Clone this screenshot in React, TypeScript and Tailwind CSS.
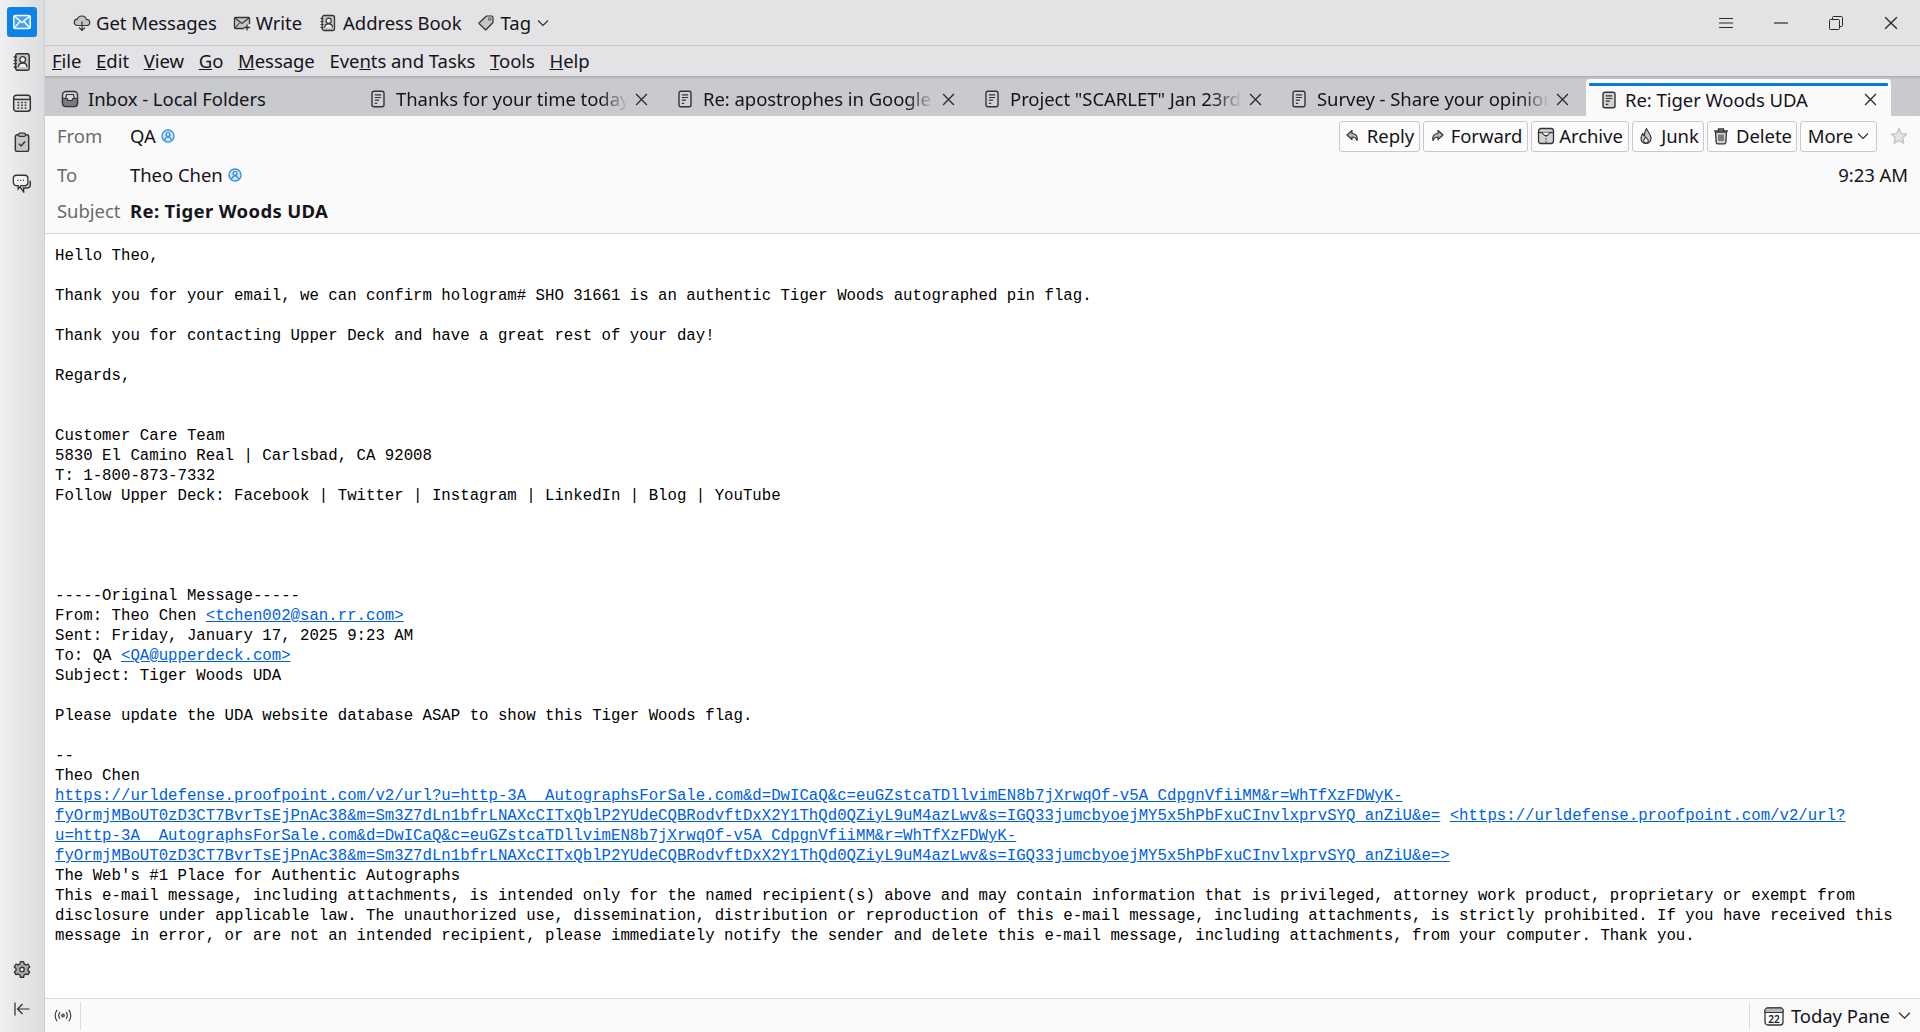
import React from 'react';

type IconProps = { className?: string };

const stroke = '#333335';

const MailIcon = ({ className = '' }: IconProps) => (
  <svg viewBox="0 0 20 20" className={className} fill="none">
    <rect x="2.5" y="4" width="15" height="12" rx="1.5" fill="#b9dcfb" fillOpacity="0.35" stroke="#fff" strokeWidth="1.4" />
    <path d="M3 4.5l7 6 7-6M3 15.5l5.2-6M17 15.5l-5.2-6" stroke="#fff" strokeWidth="1.2" />
  </svg>
);

const AddressBookIcon = ({ className = '' }: IconProps) => (
  <svg viewBox="0 0 18 18" className={className} fill="none">
    <rect x="3.2" y="1.5" width="12.3" height="15" rx="2" fill="#c6c6c8" stroke={stroke} strokeWidth="1.3" />
    <path d="M1.5 4.5h3M1.5 7.5h3M1.5 10.5h3M1.5 13.5h3" stroke={stroke} strokeWidth="1.2" />
    <circle cx="9.6" cy="6.8" r="2.6" fill="#f4f4f4" stroke={stroke} strokeWidth="1.2" />
    <path d="M5.8 13.5c0-2.4 1.4-3.6 3.8-3.6s3.8 1.2 3.8 3.6" fill="#f4f4f4" stroke={stroke} strokeWidth="1.2" />
  </svg>
);

const CalendarIcon = ({ className = '' }: IconProps) => (
  <svg viewBox="0 0 18 18" className={className} fill="none">
    <rect x="1.5" y="2" width="15" height="14.5" rx="2.5" fill="#dcdcde" stroke={stroke} strokeWidth="1.3" />
    <path d="M1.5 5.8h15" stroke={stroke} strokeWidth="1.3" />
    <path d="M5 8.5h1.5M8.2 8.5h1.5M11.4 8.5h1.5M5 11h1.5M8.2 11h1.5M11.4 11h1.5M5 13.5h1.5M8.2 13.5h1.5M11.4 13.5h1.5" stroke={stroke} strokeWidth="1.4" />
  </svg>
);

const TaskIcon = ({ className = '' }: IconProps) => (
  <svg viewBox="0 0 18 18" className={className} fill="none">
    <rect x="3" y="2.5" width="12" height="15" rx="1.8" fill="#c6c6c8" stroke={stroke} strokeWidth="1.3" />
    <rect x="6" y="1" width="6" height="3" rx="1" fill="#c6c6c8" stroke={stroke} strokeWidth="1.1" />
    <path d="M6.2 10.5l2 2 3.6-4" stroke={stroke} strokeWidth="1.3" />
  </svg>
);

const ChatIcon = ({ className = '' }: IconProps) => (
  <svg viewBox="0 0 18 18" className={className} fill="none">
    <path d="M7 12.5l3.5 4.5v-3.5h2.5c2 0 3.5-1 3.5-3V7" fill="#c6c6c8" stroke={stroke} strokeWidth="1.2" />
    <path d="M4 2h7.5c1.7 0 2.8 1 2.8 2.8v3.6c0 1.8-1.1 2.9-2.8 2.9H8l-2.5 3v-3H4c-1.7 0-2.8-1.1-2.8-2.9V4.8C1.2 3 2.3 2 4 2z" fill="#f2f2f2" stroke={stroke} strokeWidth="1.2" />
    <path d="M4.8 6.7h1M7.3 6.7h1M9.8 6.7h1" stroke={stroke} strokeWidth="1.2" />
  </svg>
);

const GearIcon = ({ className = '' }: IconProps) => (
  <svg viewBox="0 0 18 18" className={className} fill="none">
    <path d="M7.6 1.5h2.8l.5 2 1.6.9 2-.6 1.4 2.4-1.5 1.4v1.8l1.5 1.4-1.4 2.4-2-.6-1.6.9-.5 2H7.6l-.5-2-1.6-.9-2 .6-1.4-2.4 1.5-1.4V7.6L2.1 6.2l1.4-2.4 2 .6 1.6-.9z" fill="#a9a9ab" stroke={stroke} strokeWidth="1.2" strokeLinejoin="round" />
    <circle cx="9" cy="8.5" r="2" fill="#f2f2f2" stroke={stroke} strokeWidth="1.2" />
  </svg>
);

const CollapseIcon = ({ className = '' }: IconProps) => (
  <svg viewBox="0 0 18 18" className={className} fill="none">
    <path d="M2 2.5v13M16.5 9H4.5M9.5 4l-5 5 5 5" stroke="#2b2b2d" strokeWidth="1.2" />
  </svg>
);

const CloudIcon = ({ className = '' }: IconProps) => (
  <svg viewBox="0 0 18 18" className={className} fill="none">
    <path d="M5 11.5c-2.2 0-3.7-1.3-3.7-3.2 0-1.8 1.3-3 3-3.1C4.9 3.4 6.6 2 8.8 2c2.4 0 4.1 1.5 4.5 3.4 1.9 0 3.4 1.3 3.4 3 0 1.900-1.500 3.100-3.500 3.100z" fill="#c6c6c8" stroke={stroke} strokeWidth="1.2" />
    <path d="M9 7.500v9M6 13.500l3 3 3-3" stroke={stroke} strokeWidth="1.2" fill="none" />
  </svg>
);

const WriteIcon = ({ className = '' }: IconProps) => (
  <svg viewBox="0 0 18 18" className={className} fill="none">
    <path d="M11 14.500H2.500a1 1 0 01-1-1v-9a1 1 0 011-1h13a1 1 0 011 1V10" fill="#c6c6c8" stroke={stroke} strokeWidth="1.3" />
    <path d="M2 4l7 5.500L16 4M2 14l4.500-5" stroke={stroke} strokeWidth="1.1" />
    <path d="M14 10.500v6M11 13.500h6" stroke={stroke} strokeWidth="1.3" />
  </svg>
);

const TagIcon = ({ className = '' }: IconProps) => (
  <svg viewBox="0 0 18 18" className={className} fill="none">
    <path d="M9.500 2h5.200c.8 0 1.300.5 1.300 1.300v5.200L8.700 16 1.800 9.200z" fill="#c6c6c8" stroke={stroke} strokeWidth="1.2" strokeLinejoin="round" />
    <circle cx="12.700" cy="5.200" r="1.200" fill="#fff" stroke={stroke} />
  </svg>
);

const ChevronIcon = ({ className = '' }: IconProps) => (
  <svg viewBox="0 0 12 12" className={className} fill="none">
    <path d="M1 3.500l5 5 5-5" stroke="#2b2b2d" strokeWidth="1.1" />
  </svg>
);

const InboxIcon = ({ className = '' }: IconProps) => (
  <svg viewBox="0 0 18 18" className={className} fill="none">
    <rect x="1.500" y="1.500" width="15" height="15" rx="3.500" fill="#d9d9db" stroke={stroke} strokeWidth="1.4" />
    <path d="M4.500 8.500l1-4h7l1 4" stroke={stroke} strokeWidth="1.2" />
    <path d="M1.500 8.500h4.700l.8 2h4l.8-2h4.700v5a3 3 0 01-3 3h-9a3 3 0 01-3-3z" fill="#7b7b7d" stroke={stroke} strokeWidth="1.2" />
  </svg>
);

const MessageIcon = ({ className = '' }: IconProps) => (
  <svg viewBox="0 0 18 18" className={className} fill="none">
    <rect x="3" y="1.200" width="12" height="15.600" rx="2" fill="#d2d2d4" stroke={stroke} strokeWidth="1.4" />
    <path d="M5.800 4.800h6.400M5.800 7.500h6.400M5.800 10.200h4.200M5.800 13.400h2.400" stroke={stroke} strokeWidth="1.2" />
  </svg>
);

const CloseIcon = ({ className = '' }: IconProps) => (
  <svg viewBox="0 0 12 12" className={className} fill="none">
    <path d="M1 1l10 10M11 1L1 11" stroke="#2b2b2d" strokeWidth="1.2" />
  </svg>
);

const PersonBadge = ({ className = '' }: IconProps) => (
  <svg viewBox="0 0 14 14" className={className} fill="none">
    <circle cx="7" cy="7" r="6" fill="#cfe6fa" stroke="#3b93e0" strokeWidth="1.400" />
    <circle cx="7" cy="5.500" r="2" stroke="#2b86d8" strokeWidth="1.200" />
    <path d="M3.800 11c.2-2 1.300-3 3.200-3s3 1 3.200 3" stroke="#2b86d8" strokeWidth="1.200" />
  </svg>
);

const ReplyIcon = ({ className = '' }: IconProps) => (
  <svg viewBox="0 0 16 16" className={className} fill="none">
    <path d="M7 2.500L2 7l5 4.500V9c2.500 0 4 .8 5 3.500 1-4-1-7-5-7z" fill="#b9b9bb" stroke={stroke} strokeWidth="1.200" strokeLinejoin="round" />
  </svg>
);

const ForwardIcon = ({ className = '' }: IconProps) => (
  <svg viewBox="0 0 16 16" className={className} fill="none">
    <path d="M9 2.500L14 7l-5 4.500V9c-2.500 0-4 .8-5 3.500-1-4 1-7 5-7z" fill="#b9b9bb" stroke={stroke} strokeWidth="1.200" strokeLinejoin="round" />
  </svg>
);

const ArchiveIcon = ({ className = '' }: IconProps) => (
  <svg viewBox="0 0 18 18" className={className} fill="none">
    <rect x="1.500" y="1.500" width="15" height="15" rx="2.500" fill="#d2d2d4" stroke={stroke} strokeWidth="1.300" />
    <path d="M1.500 5.500h15" stroke={stroke} strokeWidth="1.300" />
    <path d="M5 5.500l2.500 3h3l2.500-3" fill="#f4f4f4" stroke={stroke} strokeWidth="1.100" />
    <path d="M9 8.500v8" stroke={stroke} strokeWidth="1.100" strokeDasharray="1.500 1.200" />
  </svg>
);

const JunkIcon = ({ className = '' }: IconProps) => (
  <svg viewBox="0 0 18 18" className={className} fill="none">
    <path d="M9.500 1.500c.5 3 4.500 5 4.500 9.500 0 3.500-2.300 5.500-5 5.500s-5-2-5-5.300c0-2 1-3.700 2-4.700.2 1.300.7 2 1.500 2.500C7.500 6 8 3.500 9.500 1.500z" fill="#c6c6c8" stroke={stroke} strokeWidth="1.200" strokeLinejoin="round" />
    <path d="M9 16c-1.500 0-2.300-1-2.300-2.300 0-1.500 1.300-2.200 2.100-3.700 1 1.300 2.500 2.200 2.500 3.800 0 1.200-.9 2.200-2.300 2.200z" fill="#fafafa" stroke={stroke} strokeWidth="1.100" />
  </svg>
);

const TrashIcon = ({ className = '' }: IconProps) => (
  <svg viewBox="0 0 18 18" className={className} fill="none">
    <path d="M3.500 5h11l-.7 10.500c-.1.800-.6 1.300-1.400 1.300H5.600c-.8 0-1.300-.5-1.400-1.300z" fill="#d2d2d4" stroke={stroke} strokeWidth="1.300" />
    <path d="M2 3.800h14M6.500 3.500V2h5v1.500" stroke={stroke} strokeWidth="1.300" />
    <path d="M7 7.500v6.500M9 7.500v6.500M11 7.500v6.500" stroke={stroke} strokeWidth="1.100" />
  </svg>
);

const StarIcon = ({ className = '' }: IconProps) => (
  <svg viewBox="0 0 18 18" className={className} fill="none">
    <path d="M9 1.500l2.300 5 5.400.6-4 3.700 1.100 5.400L9 13.500l-4.800 2.700 1.100-5.400-4-3.700 5.400-.6z" fill="#e4e4e6" stroke="#c0c0c2" strokeWidth="1.200" strokeLinejoin="round" />
  </svg>
);

const WirelessIcon = ({ className = '' }: IconProps) => (
  <svg viewBox="0 0 20 16" className={className} fill="none">
    <circle cx="10" cy="8" r="1.800" fill="#6e6e70" stroke={stroke} strokeWidth="0.600" />
    <path d="M6.800 4.500c-1.600 2-1.600 5 0 7M13.200 4.500c1.600 2 1.600 5 0 7M3.800 2c-2.800 3.500-2.800 8.500 0 12M16.200 2c2.800 3.500 2.800 8.500 0 12" stroke={stroke} strokeWidth="1.200" />
  </svg>
);

const TodayIcon = ({ className = '' }: IconProps) => (
  <svg viewBox="0 0 20 20" className={className} fill="none">
    <rect x="1" y="2" width="18" height="17" rx="3" fill="#fafafa" stroke={stroke} strokeWidth="1.300" />
    <path d="M1 3.500a2 2 0 012-1.500h14a2 2 0 012 1.500V6.500H1z" fill="#b9b9bb" stroke={stroke} strokeWidth="1" />
    <text x="10" y="16.500" textAnchor="middle" fontSize="10" fontWeight="600" fill="#222" fontFamily="Noto Sans, sans-serif">22</text>
  </svg>
);

const tabs = [
  'Thanks for your time today',
  'Re: apostrophes in Google Docs',
  'Project "SCARLET" Jan 23rd',
  'Survey - Share your opinion',
];

const menus: [string, string, string][] = [
  ['', 'F', 'ile'],
  ['', 'E', 'dit'],
  ['', 'V', 'iew'],
  ['', 'G', 'o'],
  ['', 'M', 'essage'],
  ['Eve', 'n', 'ts and Tasks'],
  ['', 'T', 'ools'],
  ['', 'H', 'elp'],
];

const bodyTop = `Hello Theo,

Thank you for your email, we can confirm hologram# SHO 31661 is an authentic Tiger Woods autographed pin flag.

Thank you for contacting Upper Deck and have a great rest of your day!

Regards,


Customer Care Team
5830 El Camino Real | Carlsbad, CA 92008
T: 1-800-873-7332
Follow Upper Deck: Facebook | Twitter | Instagram | LinkedIn | Blog | YouTube




-----Original Message-----
From: Theo Chen `;

const linkA = `https://urldefense.proofpoint.com/v2/url?u=http-3A__AutographsForSale.com&d=DwICaQ&c=euGZstcaTDllvimEN8b7jXrwqOf-v5A_CdpgnVfiiMM&r=WhTfXzFDWyK-
fyOrmjMBoUT0zD3CT7BvrTsEjPnAc38&m=Sm3Z7dLn1bfrLNAXcCITxQblP2YUdeCQBRodvftDxX2Y1ThQd0QZiyL9uM4azLwv&s=IGQ33jumcbyoejMY5x5hPbFxuCInvlxprvSYQ_anZiU&e=`;

const linkB = `<https://urldefense.proofpoint.com/v2/url?
u=http-3A__AutographsForSale.com&d=DwICaQ&c=euGZstcaTDllvimEN8b7jXrwqOf-v5A_CdpgnVfiiMM&r=WhTfXzFDWyK-
fyOrmjMBoUT0zD3CT7BvrTsEjPnAc38&m=Sm3Z7dLn1bfrLNAXcCITxQblP2YUdeCQBRodvftDxX2Y1ThQd0QZiyL9uM4azLwv&s=IGQ33jumcbyoejMY5x5hPbFxuCInvlxprvSYQ_anZiU&e=>`;

const bodyEnd = `
The Web's #1 Place for Authentic Autographs
This e-mail message, including attachments, is intended only for the named recipient(s) above and may contain information that is privileged, attorney work product, proprietary or exempt from
disclosure under applicable law. The unauthorized use, dissemination, distribution or reproduction of this e-mail message, including attachments, is strictly prohibited. If you have received this
message in error, or are not an intended recipient, please immediately notify the sender and delete this e-mail message, including attachments, from your computer. Thank you.`;

const linkClass = 'text-[#0060df] underline';

const ActionButton = ({ icon, label, width, gap = 'gap-1.5' }: { icon: React.ReactNode; label: React.ReactNode; width: string; gap?: string }) => (
  <div className={`flex h-[31px] items-center justify-center rounded-[3px] border border-[#c9c9cb] bg-[#fcfcfc] ${gap} ${width}`}>
    {icon}
    <span>{label}</span>
  </div>
);

export default function App() {
  return (
    <div className="flex h-screen w-full overflow-hidden bg-white font-['Noto_Sans',sans-serif] text-[18.5px] tracking-[-0.05px] text-[#15141a]">
      {/* Left rail */}
      <aside className="flex w-[45px] shrink-0 flex-col items-center border-r border-[#d0d0d2] bg-gradient-to-r from-[#f0f0f1] to-[#dcdcde] pt-[7px] pb-[14px]">
        <div className="flex h-[30px] w-[30px] items-center justify-center rounded-[3px] bg-[#0a84e8]">
          <MailIcon className="h-[22px] w-[22px]" />
        </div>
        <AddressBookIcon className="mt-[15px] h-[20px] w-[20px]" />
        <CalendarIcon className="mt-[21px] h-[20px] w-[20px]" />
        <TaskIcon className="mt-[19px] h-[20px] w-[20px]" />
        <ChatIcon className="mt-[21px] h-[20px] w-[20px]" />
        <GearIcon className="mt-auto h-[20px] w-[20px]" />
        <CollapseIcon className="mt-[20px] h-[18px] w-[18px]" />
      </aside>

      <div className="flex min-w-0 flex-1 flex-col">
        {/* Toolbar */}
        <div className="flex h-[46px] shrink-0 items-center border-b border-[#c8c8ca] bg-[#e3e3e6] pl-[28px]">
          <div className="flex items-center gap-[5px]">
            <CloudIcon className="h-[18px] w-[18px]" />
            <span>Get Messages</span>
          </div>
          <div className="ml-[16px] flex items-center gap-[5px]">
            <WriteIcon className="h-[18px] w-[18px]" />
            <span>Write</span>
          </div>
          <div className="ml-[17px] flex items-center gap-[6px]">
            <AddressBookIcon className="h-[18px] w-[18px]" />
            <span>Address Book</span>
          </div>
          <div className="ml-[15px] flex items-center gap-[6px]">
            <TagIcon className="h-[18px] w-[18px]" />
            <span>Tag</span>
            <ChevronIcon className="h-[12px] w-[12px]" />
          </div>
          <div className="ml-auto flex items-center pr-[22px]">
            <svg viewBox="0 0 14 12" className="h-[12px] w-[14px]" fill="none">
              <path d="M0 1.500h14M0 6h14M0 10.500h14" stroke="#2b2b2d" strokeWidth="1.200" />
            </svg>
            <svg viewBox="0 0 14 12" className="ml-[41px] h-[12px] w-[14px]" fill="none">
              <path d="M0 6h14" stroke="#2b2b2d" strokeWidth="1.200" />
            </svg>
            <svg viewBox="0 0 14 14" className="ml-[41px] h-[14px] w-[14px]" fill="none">
              <rect x="0.500" y="3.500" width="10" height="10" rx="1" stroke="#2b2b2d" />
              <path d="M3.500 3.500V1.500a1 1 0 011-1h8a1 1 0 011 1v8a1 1 0 01-1 1h-2" stroke="#2b2b2d" />
            </svg>
            <CloseIcon className="ml-[41px] h-[14px] w-[14px]" />
          </div>
        </div>

        {/* Menu bar */}
        <nav className="flex h-[30px] shrink-0 items-center gap-[14.7px] bg-[#e3e3e6] pl-[7px]">
          {menus.map(([before, key, after]) => (
            <span key={before + key + after}>
              {before}
              <u>{key}</u>
              {after}
            </span>
          ))}
        </nav>

        {/* Tabs */}
        <div className="flex h-[40px] shrink-0 items-end bg-[#c9cacd] pl-px shadow-[inset_0_3px_3px_-2px_rgba(0,0,0,0.2)]">
          <div className="flex h-[34px] w-[308px] items-center gap-[9px] pl-[15px]">
            <InboxIcon className="h-[18px] w-[18px]" />
            <span>Inbox - Local Folders</span>
          </div>
          {tabs.map((title) => (
            <div key={title} className="flex h-[34px] w-[307px] items-center pl-[15px]">
              <MessageIcon className="h-[18px] w-[18px] shrink-0" />
              <span className="ml-[9px] w-[232px] overflow-hidden whitespace-nowrap [mask-image:linear-gradient(to_right,black_88%,transparent)]">
                {title}
              </span>
              <CloseIcon className="ml-[7px] h-[13px] w-[13px] shrink-0" />
            </div>
          ))}
          <div className="ml-[4px] flex h-[37px] w-[305px] flex-col rounded-t-[4px] bg-[#fafafa] px-[3px]">
            <div className="mt-[4px] h-[3px] shrink-0 rounded-[1px] bg-[#0a78d6]" />
            <div className="flex flex-1 items-center pb-[5px] pl-[11px]">
              <MessageIcon className="h-[18px] w-[18px] shrink-0" />
              <span className="ml-[7px]">Re: Tiger Woods UDA</span>
              <CloseIcon className="ml-auto mr-[11px] h-[13px] w-[13px] shrink-0" />
            </div>
          </div>
        </div>

        {/* Message header */}
        <header className="flex h-[118px] shrink-0 flex-col border-b border-[#d4d4d6] bg-[#fafafa] pl-[12px] pr-[12px]">
          <div className="flex h-[40px] items-center">
            <span className="w-[73px] text-[#6a6a6e]">From</span>
            <span>QA</span>
            <PersonBadge className="ml-[5px] h-[14px] w-[14px]" />
            <div className="ml-auto flex items-center gap-[3px]">
              <ActionButton icon={<ReplyIcon className="h-[16px] w-[16px]" />} label="Reply" width="w-[81px]" />
              <ActionButton icon={<ForwardIcon className="h-[16px] w-[16px]" />} label="Forward" width="w-[105px]" />
              <ActionButton icon={<ArchiveIcon className="h-[18px] w-[18px]" />} label="Archive" width="w-[98px]" gap="gap-1" />
              <ActionButton icon={<JunkIcon className="h-[18px] w-[18px]" />} label="Junk" width="w-[72px]" />
              <ActionButton icon={<TrashIcon className="h-[18px] w-[18px]" />} label="Delete" width="w-[90px]" />
              <ActionButton icon={<ChevronIcon className="order-last h-[12px] w-[12px]" />} label="More" width="w-[77px]" gap="gap-1" />
              <StarIcon className="ml-[10px] h-[18px] w-[18px]" />
            </div>
          </div>
          <div className="flex h-[37px] items-center">
            <span className="w-[73px] text-[#6a6a6e]">To</span>
            <span>Theo Chen</span>
            <PersonBadge className="ml-[5px] h-[14px] w-[14px]" />
            <span className="ml-auto">9:23 AM</span>
          </div>
          <div className="flex h-[36px] items-center">
            <span className="w-[73px] text-[#6a6a6e]">Subject</span>
            <span className="font-bold tracking-[0.35px]">Re: Tiger Woods UDA</span>
          </div>
        </header>

        {/* Message body */}
        <main className="min-h-0 flex-1 overflow-hidden bg-white pl-[10px] pt-[12px]">
          <pre className="font-['Liberation_Mono',monospace] text-[15.71px] leading-[20px] tracking-normal text-black">
            {bodyTop}
            <a className={linkClass}>{'<tchen002@san.rr.com>'}</a>
            {'\nSent: Friday, January 17, 2025 9:23 AM\nTo: QA '}
            <a className={linkClass}>{'<QA@upperdeck.com>'}</a>
            {'\nSubject: Tiger Woods UDA\n\nPlease update the UDA website database ASAP to show this Tiger Woods flag.\n\n--\nTheo Chen\n'}
            <a className={linkClass}>{linkA}</a>{' '}
            <a className={linkClass}>{linkB}</a>
            {bodyEnd}
          </pre>
        </main>

        {/* Status bar */}
        <footer className="flex h-[34px] shrink-0 items-center border-t border-[#d8d8da] bg-[#fafafa]">
          <div className="flex h-[28px] w-[36px] items-center justify-center border-r border-[#dcdcde]">
            <WirelessIcon className="h-[15px] w-[20px]" />
          </div>
          <div className="ml-auto flex h-[28px] items-center gap-[7px] border-l border-[#dcdcde] pl-[14px] pr-[9px]">
            <TodayIcon className="h-[20px] w-[20px]" />
            <span>Today Pane</span>
            <ChevronIcon className="ml-[1px] h-[13px] w-[13px]" />
          </div>
        </footer>
      </div>
    </div>
  );
}
